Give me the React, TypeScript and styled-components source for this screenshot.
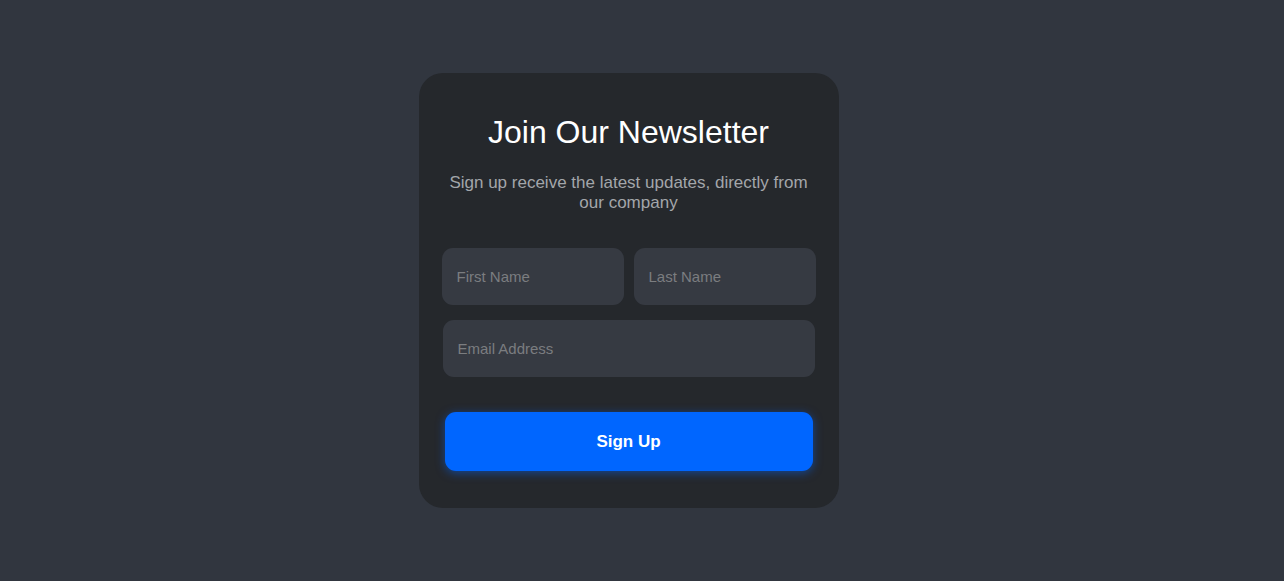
import React from "react";
import styled, { createGlobalStyle } from "styled-components";

const Global = createGlobalStyle`
  html, body { margin: 0; padding: 0; }
  body {
    background: #31363f;
    font-family: "Liberation Sans", Arial, sans-serif;
    min-height: 581px;
  }
`;

const Page = styled.div`
  display: flex;
  justify-content: center;
  padding-top: 73px;
  padding-right: 27px;
`;

const Card = styled.form`
  width: 420px;
  box-sizing: border-box;
  background: #25282c;
  border-radius: 24px;
  padding: 38px 23px 37px;
  display: flex;
  flex-direction: column;
  align-items: stretch;
`;

const Title = styled.h1`
  margin: 0;
  font-size: 32px;
  line-height: 42px;
  font-weight: 400;
  color: #ffffff;
  text-align: center;
`;

const Subtitle = styled.p`
  margin: 20px 0 0;
  padding: 0 5px;
  font-size: 17px;
  line-height: 20px;
  color: #a3a6aa;
  text-align: center;
`;

const Row = styled.div`
  display: flex;
  gap: 10px;
  margin-top: 35px;
`;

const Input = styled.input<{ $inset?: boolean }>`
  flex: 1;
  min-width: 0;
  box-sizing: border-box;
  height: 57px;
  border: none;
  outline: none;
  border-radius: 11px;
  background: #363a42;
  color: #ffffff;
  font-family: "Liberation Sans", Arial, sans-serif;
  font-size: 15px;
  padding: 0 15px;
  margin: ${(p) => (p.$inset ? "0 1px" : "0")};
  &::placeholder {
    color: #7b7d80;
  }
`;

const EmailRow = styled.div`
  display: flex;
  margin-top: 15px;
`;

const Button = styled.button`
  margin: 35px 3px 0;
  height: 59px;
  border: none;
  border-radius: 11px;
  background: #0066ff;
  color: #ffffff;
  font-family: "Liberation Sans", Arial, sans-serif;
  font-size: 17px;
  font-weight: 700;
  cursor: pointer;
  box-shadow: 0 2px 10px rgba(0, 102, 255, 0.5);
`;

export default function App() {
  return (
    <>
      <Global />
      <Page>
        <Card onSubmit={(e) => e.preventDefault()}>
          <Title>Join Our Newsletter</Title>
          <Subtitle>
            Sign up receive the latest updates, directly from our company
          </Subtitle>
          <Row>
            <Input placeholder="First Name" />
            <Input placeholder="Last Name" />
          </Row>
          <EmailRow>
            <Input $inset placeholder="Email Address" />
          </EmailRow>
          <Button type="submit">Sign Up</Button>
        </Card>
      </Page>
    </>
  );
}
